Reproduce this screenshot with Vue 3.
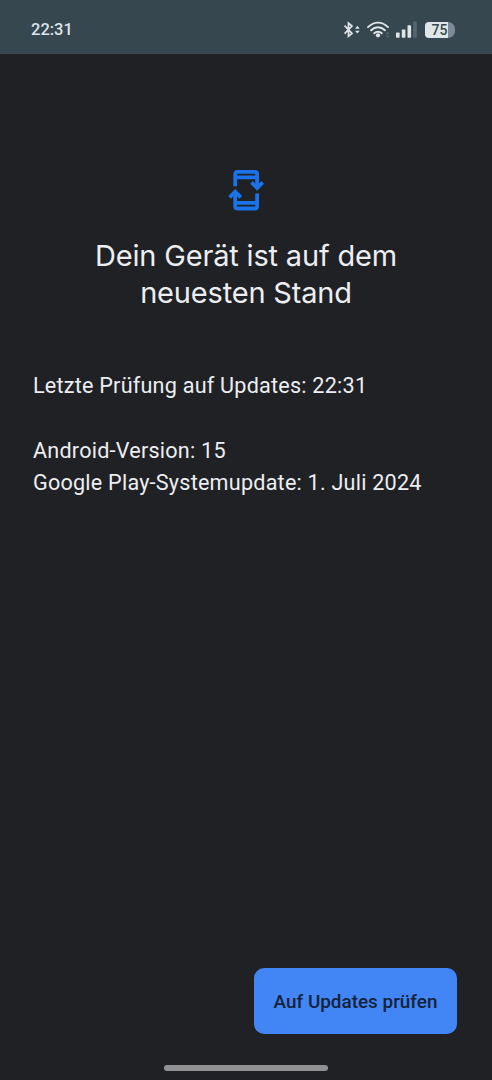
<template>
  <div class="screen">
    <header class="status-bar">
      <span class="clock">22:31</span>
      <div class="status-icons">
        <svg class="bluetooth" width="18" height="18" viewBox="0 0 18 18">
          <path d="M1.6 4.7 9 12.4 5.5 15.3V2.1L9 5 1.6 12.7" />
          <path class="solid" d="M14.4 4.8 16.7 7.7H12.1zM14.4 12.6 16.7 9.7H12.1z" />
        </svg>
        <svg class="wifi" width="24" height="18" viewBox="0 0 24 18">
          <path d="M1 6.1C7.2.1 14.8.1 21 6.1M4.1 9.3C8.2 5.3 13.8 5.3 17.9 9.3M7.2 12.2C9.3 10.2 12.7 10.2 14.8 12.2" />
          <circle class="solid" cx="11" cy="14.3" r="2.1" />
          <path class="dim" d="M20.7 10.5 22.7 13H18.7zM20.7 17 22.7 14.5H18.7z" />
        </svg>
        <svg class="signal" width="22" height="18" viewBox="0 0 22 18">
          <rect class="solid" x="0" y="11.6" width="3.6" height="5.2" rx="0.7" />
          <rect class="solid" x="5.8" y="8.6" width="3.6" height="8.2" rx="0.7" />
          <rect class="solid" x="11.5" y="4.3" width="3.6" height="12.5" rx="0.7" />
          <rect class="dim" x="17.2" y="0.5" width="3.6" height="16.3" rx="0.7" />
        </svg>
        <div class="battery">
          <span class="battery-level">{{ battery }}</span>
        </div>
      </div>
    </header>

    <main class="content">
      <svg class="update-icon" width="36" height="41" viewBox="0 0 36 41">
        <path d="M7.2 16.2V4.2Q7.2 1.9 9.5 1.9H26.8Q29.1 1.9 29.1 4.2V18" />
        <path d="M7.2 7.4H29.1M7.2 32.9H29.1" />
        <path d="M7.2 22V36.2Q7.2 38.5 9.5 38.5H26.8Q29.1 38.5 29.1 36.2V23.6" />
        <path d="M23.5 12.4 29.1 18 34.7 12.4M1.6 27.3 7.2 21.7 12.8 27.3" />
      </svg>
      <h1 class="title">Dein Gerät ist auf dem<br />neuesten Stand</h1>
      <div class="details">
        <p>Letzte Prüfung auf Updates: 22:31</p>
        <p class="version">Android-Version: 15</p>
        <p>Google Play-Systemupdate: 1. Juli 2024</p>
      </div>
    </main>

    <footer class="actions">
      <button class="check-button" type="button">Auf Updates prüfen</button>
    </footer>
    <div class="nav-handle"></div>
  </div>
</template>

<script setup>
import { ref } from 'vue'

const battery = ref(75)
</script>

<style>
body {
  margin: 0;
  background: #202125;
}
</style>

<style scoped>
.screen {
  display: flex;
  flex-direction: column;
  width: 492px;
  height: 1080px;
  overflow: hidden;
  box-sizing: border-box;
  background: #202125;
  color: #eceef1;
  font-family: Roboto, sans-serif;
}

.status-bar {
  display: flex;
  justify-content: space-between;
  height: 54px;
  padding: 0 37px 0 31px;
  box-sizing: border-box;
  background: #37474f;
}

.clock {
  margin-top: 20px;
  color: #dbe5eb;
  font-size: 16.5px;
  font-weight: 500;
  line-height: 20px;
}

.status-icons {
  display: flex;
  align-items: flex-start;
  padding-top: 21px;
}

.status-icons path {
  fill: none;
  stroke: #dfe6ea;
  stroke-width: 1.7;
}

.status-icons .solid {
  fill: #dfe6ea;
  stroke: none;
}

.status-icons .dim {
  fill: #566570;
  stroke: none;
}

.wifi {
  margin-left: 6px;
}

.status-icons .wifi path:not(.dim) {
  stroke-width: 1.9;
  stroke-linecap: round;
}

.signal {
  margin-left: 5px;
}

.battery {
  display: flex;
  align-items: center;
  width: 30px;
  height: 16px;
  margin: 1px 0 0 7px;
  box-sizing: border-box;
  border-radius: 4px 7px 7px 4px;
  background: linear-gradient(to right, #dfe6ea 76%, #7d8a91 76%);
}

.battery-level {
  width: 29px;
  color: #37474f;
  font-size: 14px;
  font-weight: 500;
  line-height: 16px;
  text-align: center;
}

.content {
  flex: 1;
  padding: 116px 33px 0;
}

.update-icon {
  display: block;
  margin: 0 auto;
}

.update-icon path {
  fill: none;
  stroke: #1a73e8;
  stroke-width: 3.8;
}

.title {
  margin: 25.5px 0 0;
  font-family: Inter, sans-serif;
  font-size: 29px;
  font-weight: 400;
  line-height: 37.5px;
  letter-spacing: -0.18px;
  text-align: center;
}

.details {
  margin-top: 58px;
  font-size: 21.6px;
  line-height: 32.5px;
  letter-spacing: 0.22px;
  white-space: nowrap;
}

.details p {
  margin: 0;
}

.details .version {
  margin-top: 32.5px;
}

.actions {
  display: flex;
  justify-content: flex-end;
  padding: 0 35px 31px 0;
}

.check-button {
  width: 203px;
  height: 66px;
  padding: 0;
  border: 0;
  border-radius: 10px;
  background: #4285f4;
  color: #14233b;
  font-family: inherit;
  font-size: 18.9px;
  font-weight: 500;
  white-space: nowrap;
}

.nav-handle {
  flex-shrink: 0;
  width: 164px;
  height: 6px;
  margin: 0 auto 9px;
  border-radius: 3px;
  background: #919194;
}
</style>
